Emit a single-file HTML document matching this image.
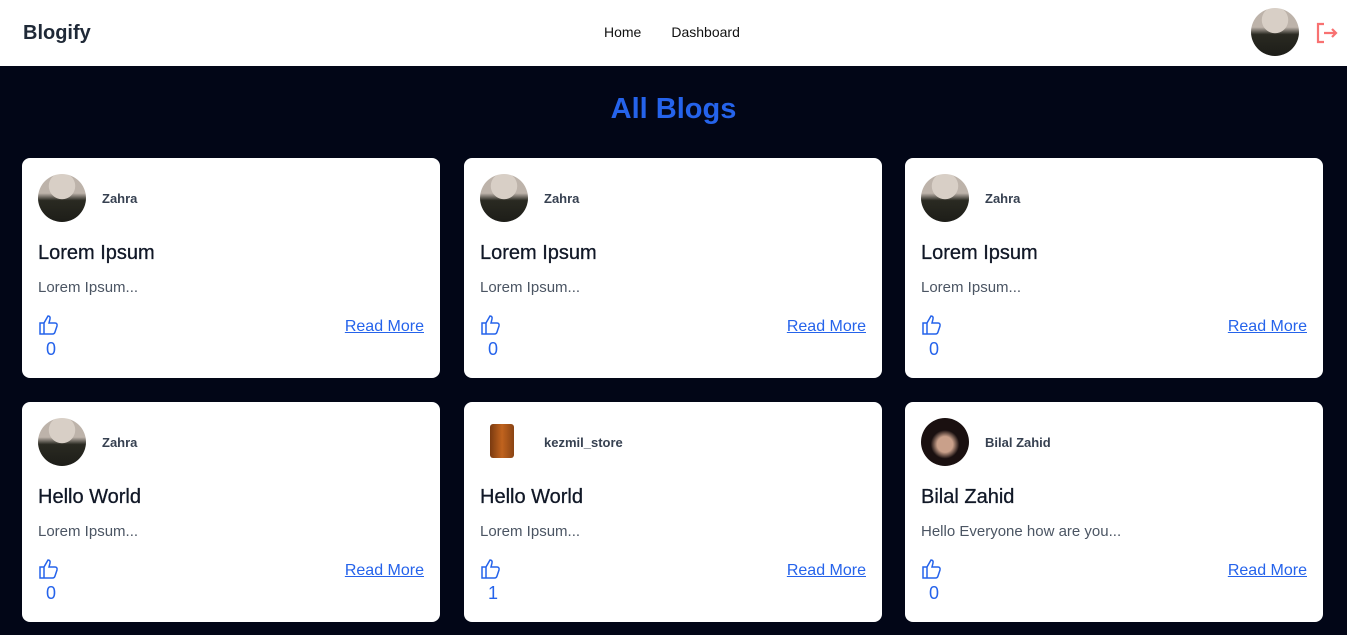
<!DOCTYPE html>
<html><head><style>
*{box-sizing:border-box;margin:0;padding:0}
body{width:1347px;height:635px;overflow:hidden;background:#020617;font-family:"Liberation Sans",sans-serif}
.nav{position:absolute;left:0;top:0;width:1347px;height:66px;background:#fff}
.logo{position:absolute;left:23px;top:22px;font-size:20px;font-weight:bold;color:#1f2937}
.links{position:absolute;left:604px;top:24px;font-size:14px;color:#111}
.links span{margin-right:30px}
.av{border-radius:50%;background:radial-gradient(circle at 50% 25%,#d8cfc6 0 30%,transparent 31%),linear-gradient(180deg,#bdb3aa 0 40%,#2a2a22 55%,#1d1d18 100%)}
.nav .av{position:absolute;left:1251px;top:8px;width:48px;height:48px}
h1{position:absolute;top:93px;width:1347px;text-align:center;color:#2563eb;font-size:29px;font-weight:bold}
.card{position:absolute;width:418px;height:220px;background:#fff;border-radius:8px}
.card .av{position:absolute;left:16px;top:16px;width:48px;height:48px}
.name{position:absolute;left:80px;top:33px;font-size:13px;font-weight:bold;color:#374151}
.t{position:absolute;left:16px;top:84px;font-size:20px;color:#111827;-webkit-text-stroke:0.3px #111827}
.b{position:absolute;left:16px;top:121px;font-size:15px;color:#4b5563}
.like{position:absolute;left:15px;top:155px}
.cnt{position:absolute;left:24px;top:181px;font-size:18px;color:#2563eb}
.rm{position:absolute;right:16px;top:160px;font-size:16px;color:#2563eb;text-decoration:underline}
</style></head><body>
<div class="nav"><div class="logo">Blogify</div><div class="links"><span>Home</span><span>Dashboard</span></div><div class="av"></div>
<svg style="position:absolute;left:1315px;top:21px" width="24" height="24" viewBox="0 0 24 24" fill="none" stroke="#f87171" stroke-width="2.2"><path d="M9 3H3v18h6M9 12h12M17 8l4 4-4 4"/></svg></div>
<h1>All Blogs</h1>
<div id="c"></div>
<script>
const d=[["Zahra","Lorem Ipsum","Lorem Ipsum...",0,0],["Zahra","Lorem Ipsum","Lorem Ipsum...",0,0],["Zahra","Lorem Ipsum","Lorem Ipsum...",0,0],["Zahra","Hello World","Lorem Ipsum...",0,0],["kezmil_store","Hello World","Lorem Ipsum...",1,1],["Bilal Zahid","Bilal Zahid","Hello Everyone how are you...",0,2]];
const xs=[22,464,905],ys=[158,402];let h="";
d.forEach((e,i)=>{let av=e[4]==1?'<div style="position:absolute;left:26px;top:22px;width:24px;height:34px;background:linear-gradient(90deg,#7a3a10,#c0631e,#8a4414);border-radius:3px"></div>':e[4]==2?'<div class="av" style="background:radial-gradient(circle at 50% 55%,#c9a08a 0 22%,#1a1010 40%)"></div>':'<div class="av"></div>';
h+=`<div class="card" style="left:${xs[i%3]}px;top:${ys[i/3|0]}px">${av}<div class="name">${e[0]}</div><div class="t">${e[1]}</div><div class="b">${e[2]}</div><svg class="like" width="24" height="24" viewBox="0 0 24 24" fill="none" stroke="#2563eb" stroke-width="1.5"><path d="M7 10v11H3V10h4zm0 0l4-7c1.5 0 2.5 1 2 3l-1 4h6c1.5 0 2.5 1.3 2 3l-2 6c-.4 1.3-1.2 2-2.5 2H7"/></svg><div class="cnt">${e[3]}</div><div class="rm">Read More</div></div>`});
document.getElementById("c").innerHTML=h;
</script>
</body></html>
